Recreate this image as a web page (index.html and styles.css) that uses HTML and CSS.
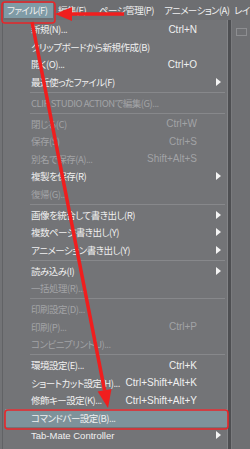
FILE: index.html
```html
<!DOCTYPE html>
<html>
<head>
	<title>Menu</title>
	<meta charset="UTF-8">
	<link rel="stylesheet" href="styles.css">
</head>
<body>
	<nav class="menubar">
		<span class="bar-item bar-active">ファイル(F)</span>
		<span class="bar-item">編集(E)</span>
		<span class="bar-item">ページ管理(P)</span>
		<span class="bar-item">アニメーション(A)</span>
		<span class="bar-item">レイ</span>
	</nav>

	<div class="screen">
		<div class="strip"></div>
		<ul class="menu">
			<li class="item"><span class="label">新規(N)...</span><span class="key">Ctrl+N</span><span class="sub"></span></li>
			<li class="item"><span class="label">クリップボードから新規作成(B)</span><span class="key"></span><span class="sub"></span></li>
			<li class="item"><span class="label">開く(O)...</span><span class="key">Ctrl+O</span><span class="sub"></span></li>
			<li class="item"><span class="label">最近使ったファイル(F)</span><span class="key"></span><span class="sub"><i class="tri"></i></span></li>
			<li class="sep"></li>
			<li class="item off"><span class="label">CLIP STUDIO ACTIONで編集(G)...</span><span class="key"></span><span class="sub"></span></li>
			<li class="sep"></li>
			<li class="item off"><span class="label">閉じる(C)</span><span class="key">Ctrl+W</span><span class="sub"></span></li>
			<li class="item off"><span class="label">保存(S)</span><span class="key">Ctrl+S</span><span class="sub"></span></li>
			<li class="item off"><span class="label">別名で保存(A)...</span><span class="key">Shift+Alt+S</span><span class="sub"></span></li>
			<li class="item"><span class="label">複製を保存(R)</span><span class="key"></span><span class="sub"><i class="tri"></i></span></li>
			<li class="item off"><span class="label">復帰(G)...</span><span class="key"></span><span class="sub"></span></li>
			<li class="sep"></li>
			<li class="item"><span class="label">画像を統合して書き出し(R)</span><span class="key"></span><span class="sub"><i class="tri"></i></span></li>
			<li class="item"><span class="label">複数ページ書き出し(Y)</span><span class="key"></span><span class="sub"><i class="tri"></i></span></li>
			<li class="item"><span class="label">アニメーション書き出し(Y)</span><span class="key"></span><span class="sub"><i class="tri"></i></span></li>
			<li class="sep"></li>
			<li class="item"><span class="label">読み込み(I)</span><span class="key"></span><span class="sub"><i class="tri"></i></span></li>
			<li class="item off"><span class="label">一括処理(R)...</span><span class="key"></span><span class="sub"></span></li>
			<li class="sep"></li>
			<li class="item off"><span class="label">印刷設定(D)...</span><span class="key"></span><span class="sub"></span></li>
			<li class="item off"><span class="label">印刷(P)...</span><span class="key">Ctrl+P</span><span class="sub"></span></li>
			<li class="item off"><span class="label">コンビニプリント(J)...</span><span class="key"></span><span class="sub"></span></li>
			<li class="sep"></li>
			<li class="item"><span class="label">環境設定(E)...</span><span class="key">Ctrl+K</span><span class="sub"></span></li>
			<li class="item"><span class="label">ショートカット設定(H)...</span><span class="key">Ctrl+Shift+Alt+K</span><span class="sub"></span></li>
			<li class="item"><span class="label">修飾キー設定(K)...</span><span class="key">Ctrl+Shift+Alt+Y</span><span class="sub"></span></li>
			<li class="item selected"><span class="label">コマンドバー設定(B)...</span><span class="key"></span><span class="sub"></span></li>
			<li class="item"><span class="label latin">Tab-Mate Controller</span><span class="key"></span><span class="sub"><i class="tri"></i></span></li>
		</ul>
		<div class="edge"></div>
		<div class="side">
			<span class="side-icon"></span>
		</div>
	</div>

	<!-- annotations drawn over the screenshot -->
	<svg class="marks" width="250" height="449" viewBox="0 0 250 449">
		<rect x="2" y="2" width="53" height="21" rx="3" fill="none" stroke="#e8262a" stroke-width="1.6"/>
		<rect x="5" y="410" width="223" height="19" rx="3" fill="none" stroke="#e8262a" stroke-width="1.6"/>
		<line x1="124" y1="14" x2="70" y2="14" stroke="#f01e1e" stroke-width="3.5"/>
		<polygon points="55,14 72,7 72,21" fill="#f01e1e"/>
		<line x1="32" y1="22" x2="104.6" y2="390.3" stroke="#f01e1e" stroke-width="3.5"/>
		<polygon points="108,408 97.7,391.6 111.5,389" fill="#f01e1e"/>
	</svg>
</body>
</html>
```

FILE: styles.css
```css
* { box-sizing: border-box; }
body {
	margin: 0;
	width: 250px;
	height: 449px;
	overflow: hidden;
	position: relative;
	background: #707174;
	font-family: "Noto Sans CJK JP", "Noto Sans", sans-serif;
	font-size: 9.5px;
	letter-spacing: -0.5px;
	font-feature-settings: "palt";
	color: #f0f0f0;
}
ul, li { margin: 0; padding: 0; list-style: none; }

.menubar {
	display: grid;
	grid-template-columns: 54px 41px 65px 70px auto;
	align-items: center;
	height: 20px;
	padding-left: 4px;
	background: #6d6e71;
	white-space: nowrap;
	overflow: hidden;
	letter-spacing: -0.6px;
}

.bar-item {
	line-height: 15px;
}

.bar-active {
	width: 49px;
	padding-left: 3px;
	background: #7f9ba6;
}

.screen {
	display: flex;
	height: 429px;
}

.strip {
	width: 3px;
	background: #727376;
	border-right: 1px solid #616265;
}

.menu {
	width: 225px;
	padding-top: 0.5px;
	background: #737477;
	border-right: 1px solid #838487;
}

.item {
	display: flex;
	align-items: center;
	height: 17.5px;
	padding: 0 6px 0 28px;
	white-space: nowrap;
}

.item.off { color: #a2a3a6; }

.item.selected {
	margin: 0 0 0 2px;
	padding-left: 26px;
	background: #7e929a;
}

.label { flex: 1; }

.latin {
	font-family: "Liberation Sans", sans-serif;
	letter-spacing: 0;
}

.key {
	text-align: right;
	font-family: "Liberation Sans", sans-serif;
	font-size: 10px;
	letter-spacing: 0;
}

.sub {
	width: 24px;
	display: flex;
	justify-content: flex-end;
}

.tri {
	width: 0;
	height: 0;
	border-top: 4px solid transparent;
	border-bottom: 4px solid transparent;
	border-left: 5px solid #f4f4f4;
}

.sep {
	height: 3.5px;
	margin: 0 2px 0 27px;
	border-top: 1px solid #87888b;
	position: relative;
	top: 1px;
}

.edge {
	width: 3px;
	background: #4e4f52;
}

.side {
	flex: 1;
	padding: 8px 0 0 4px;
	background: #6f7073;
	border-left: 1px solid #7a7b7e;
}

.side-icon {
	display: block;
	width: 11px;
	height: 8px;
	border: 1px solid #8d8e91;
}

.marks {
	position: absolute;
	left: 0;
	top: 0;
	pointer-events: none;
}
```
